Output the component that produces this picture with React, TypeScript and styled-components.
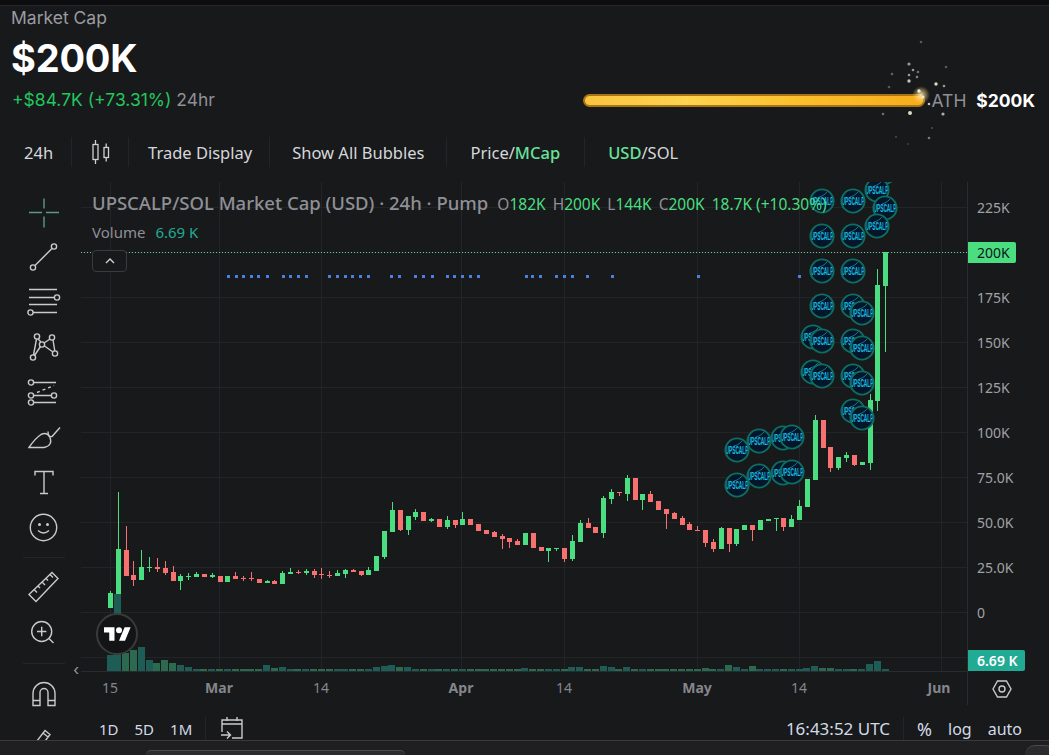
import { FunctionComponent } from "react";
import styled, { createGlobalStyle } from "styled-components";

const GlobalStyle = createGlobalStyle`
    html, body {
        margin: 0;
        background: #18191b;
        overflow: hidden;
    }
    #root {
        width: 1049px;
        height: 755px;
    }
`;

const UP = "#4ade80";
const DOWN = "#f87171";
const UI_FONT = `Inter, "Liberation Sans", sans-serif`;
const CHART_FONT = `"Noto Sans", "Open Sans", sans-serif`;

// dir, body top, body bottom, wick top, wick bottom (screen y)
type Candle = [1 | 0, number, number, number?, number?];

const candles: Candle[] = [
    [1, 593, 608, 591], [1, 549, 594, 492], [0, 550, 576, 526], [0, 575, 580, 561, 586], [1, 567, 580, 550],
    [1, 567, 568, 557, 572], [0, 567, 569, 558, 572], [0, 568, 573, 561, 575], [0, 572, 581, 566], [1, 576, 581, 574, 590],
    [1, 576, 577, 573, 580], [1, 574, 577, 572, 577], [0, 574, 577], [1, 575, 577, 573, 578], [0, 576, 582],
    [1, 576, 582], [0, 576, 579, 572], [0, 578, 579, 576, 581], [0, 578, 579, 572, 581], [0, 579, 583],
    [1, 581, 583, 580], [0, 581, 584, 580], [1, 573, 584, 571], [1, 572, 574, 568], [0, 572, 573, 570, 574],
    [1, 571, 573, 569, 575], [0, 571, 575, 569, 578], [0, 574, 575, 568, 579], [0, 575, 576, 571, 578], [1, 573, 576, 570],
    [1, 570, 574, 569, 578], [0, 570, 572, 569, 572], [0, 571, 575, 571, 576], [1, 570, 575, 567], [1, 556, 571],
    [1, 531, 557, 531, 559], [1, 510, 532, 502], [0, 510, 530, 510, 531], [1, 516, 530, 516, 535], [1, 512, 517, 509, 520],
    [0, 512, 521], [1, 519, 521, 518, 522], [0, 519, 527], [1, 520, 527, 516, 529], [0, 520, 525, 520, 528],
    [1, 519, 525, 512], [0, 519, 525], [0, 524, 531], [0, 530, 534], [0, 532, 537, 531],
    [0, 536, 539, 534, 549], [0, 538, 542, 538, 548], [0, 541, 545, 539], [1, 533, 545], [0, 533, 548],
    [0, 547, 551], [1, 548, 551, 548, 562], [1, 548, 549, 548, 551], [0, 548, 559, 548, 562], [1, 541, 559, 535, 561],
    [1, 523, 542, 520], [0, 523, 528, 518], [0, 527, 533], [1, 498, 533, 496, 538], [1, 492, 499, 489, 504],
    [0, 492, 493, 492, 496], [1, 478, 494, 475, 501], [0, 478, 500], [1, 494, 500, 494, 510], [0, 494, 502, 491],
    [0, 501, 510], [0, 509, 514, 509, 529], [0, 513, 519, 512], [0, 518, 525, 516], [0, 524, 530, 522],
    [0, 530, 531, 526, 531], [0, 530, 543, 530, 547], [0, 542, 549, 539, 552], [1, 528, 549, 527], [0, 528, 544, 528, 552],
    [1, 529, 544, 529, 546], [1, 525, 530], [0, 525, 530, 525, 541], [1, 520, 530], [1, 519, 521],
    [1, 518, 519, 518, 531], [0, 518, 527, 518, 531], [1, 519, 527, 515], [1, 506, 520, 500], [1, 479, 507],
    [1, 420, 480, 415], [0, 420, 448], [0, 447, 468, 447, 472], [1, 457, 468, 457, 470], [1, 455, 458, 452, 462],
    [0, 455, 465, 455, 466], [1, 462, 465], [1, 400, 463, 394, 470], [1, 285, 401, 269, 411], [1, 252, 286, 252, 352],
];

const volumeHeights: Record<number, number> = {
    0: 16, 1: 77, 2: 18, 3: 21, 4: 24, 5: 11, 6: 8, 7: 11, 8: 8, 9: 6, 10: 4, 20: 6, 21: 3, 22: 4,
    34: 4, 35: 5, 36: 6, 37: 4, 38: 4, 53: 3, 59: 4, 60: 4, 63: 5, 64: 4, 66: 4, 76: 3, 79: 6, 80: 4,
    82: 5, 89: 3, 90: 5, 91: 3, 92: 3, 97: 7, 98: 10, 99: 2,
};

const bubbles: [number, number][] = [
    [822, 201], [853, 201], [877, 190], [885, 208], [877, 226], [822, 236], [853, 236], [822, 271], [853, 271],
    [822, 306], [853, 306], [862, 313], [813, 337], [822, 341], [853, 341], [862, 348], [813, 372], [822, 376], [853, 376],
    [862, 383], [853, 411], [862, 418], [737, 450], [759, 441], [783, 438], [792, 437], [737, 485], [759, 476], [783, 473], [792, 472],
];

const markers = [
    228, 236, 243, 251, 258, 267, 283, 290, 298, 306, 329, 337, 345, 352, 360, 368, 391, 399, 415, 423, 432,
    447, 454, 462, 470, 478, 526, 532, 540, 556, 564, 572, 587, 612, 698, 799,
];

const sparks: [number, number, number, number][] = [
    [921, 42, 1.3, 0.3], [909, 64, 1.6, 0.6], [913, 70, 1.3, 0.6], [918, 72, 1.3, 0.4], [909, 75, 1.3, 0.6], [917, 77, 1.3, 0.5],
    [909, 81, 1.7, 0.8], [892, 74, 1.3, 0.35], [946, 67, 1.3, 0.3], [936, 84, 1.7, 0.9], [944, 86, 1.3, 0.6], [889, 87, 1.3, 0.3],
    [919, 91, 1.7, 1], [923, 97, 1.6, 0.9], [929, 104, 1.3, 0.8], [910, 113, 2, 0.9], [883, 114, 1.3, 0.4], [943, 114, 1.6, 0.7],
    [932, 128, 1, 0.25], [929, 138, 1.3, 0.45], [896, 137, 1, 0.25], [908, 144, 0.9, 0.2],
];

const gridX = [110, 219, 321, 461, 564, 697, 799, 941];
const gridY = [207, 252, 297, 342, 387, 432, 477, 522, 567, 612, 657];
const prices = ["225K", "", "175K", "150K", "125K", "100K", "75.0K", "50.0K", "25.0K", "0"];
const timeLabels: [string, number, boolean][] = [
    ["15", 110, false], ["Mar", 219, true], ["14", 321, false], ["Apr", 461, true],
    ["14", 564, false], ["May", 697, true], ["14", 799, false], ["Jun", 939, true],
];

const Page = styled.div`
    width: 1049px;
    height: 755px;
    display: flex;
    flex-direction: column;
    background: #18191b;
    overflow: hidden;
    font-family: ${UI_FONT};
`;

const TopStrip = styled.div`
    height: 5px;
    flex: none;
    background: #0d0d0f;
    border-bottom: 1px solid #26272a;
`;

const Header = styled.header`
    height: 122px;
    flex: none;
    box-sizing: border-box;
    padding: 2px 14px 0 11px;
    display: flex;
    justify-content: space-between;
    align-items: flex-end;
`;

const Stats = styled.div`
    display: flex;
    flex-direction: column;
`;

const StatLabel = styled.div`
    font-size: 17.5px;
    line-height: 20px;
    color: #9b9ca1;
`;

const StatValue = styled.div`
    font-size: 38px;
    font-weight: 700;
    line-height: 44px;
    margin-top: 8px;
    color: #fff;
    letter-spacing: -0.2px;
`;

const StatChange = styled.div`
    font-size: 17.5px;
    line-height: 22px;
    margin: 9px 0 17px 1px;
    color: #22c55e;

    span {
        color: #8f9096;
    }
`;

const Progress = styled.div`
    display: flex;
    align-items: center;
    gap: 7px;
    margin-bottom: 17px;
`;

const ProgressTrack = styled.div`
    position: relative;
    width: 342px;
    height: 13px;
    box-sizing: border-box;
    border-radius: 7px;
    border: 2px solid #a87414;
    background: linear-gradient(90deg, #f9c440 0%, #fdd34f 30%, #fbbf2b 65%, #f7ac1c 100%);
`;

const SparkLayer = styled.svg`
    position: absolute;
    left: 285px;
    top: -61px;
    pointer-events: none;
`;

const AthLabel = styled.div`
    font-size: 17.5px;
    line-height: 21px;
    color: #8f9096;
    white-space: nowrap;

    b {
        color: #fff;
        font-weight: 700;
        margin-left: 5px;
    }
`;

const Toolbar = styled.nav`
    height: 54px;
    flex: none;
    box-sizing: border-box;
    padding-bottom: 6px;
    display: flex;
    align-items: center;
    font-family: ${CHART_FONT};
    font-size: 16.5px;
    color: #d6d7da;
`;

const ToolItem = styled.div<{ $pad: number; $padRight?: number }>`
    height: 30px;
    box-sizing: border-box;
    display: flex;
    align-items: center;
    padding: 0 ${(p) => p.$padRight ?? 20}px 0 ${(p) => p.$pad}px;
    border-right: 1px solid #242528;
    white-space: nowrap;

    &:last-child {
        border-right: none;
    }
`;

const Accent = styled.span`
    color: #69e29a;
    font-weight: 500;
`;

const Workspace = styled.div`
    flex: 1;
    min-height: 0;
    display: flex;
`;

const Sidebar = styled.aside`
    width: 81px;
    flex: none;
    box-sizing: border-box;
    padding-top: 8px;
    display: flex;
    flex-direction: column;
    align-items: center;
    overflow: hidden;
    position: relative;
`;

const ToolIcon = styled.svg`
    width: 32px;
    height: 45px;
    flex: none;
    padding: 6.5px 0;
    box-sizing: border-box;
    fill: none;
    stroke: #c9cacc;
    stroke-width: 1.4;
    margin-left: 7px;
    overflow: visible;
`;

const SideDivider = styled.div<{ $top: number; $bottom: number }>`
    width: 42px;
    height: 1px;
    flex: none;
    margin: ${(p) => p.$top}px 0 ${(p) => p.$bottom}px 7px;
    background: #242528;
`;

const CollapseSide = styled.div`
    position: absolute;
    right: 2px;
    top: 479px;
    font-size: 15px;
    color: #9a9a9e;
    line-height: 18px;
`;

const Center = styled.div`
    flex: 1;
    min-width: 0;
    display: flex;
    flex-direction: column;
`;

const ChartRow = styled.div`
    display: flex;
    height: 523px;
    flex: none;
`;

const ChartColumn = styled.div`
    width: 886px;
    flex: none;
    display: flex;
    flex-direction: column;
    position: relative;
`;

const ChartCanvas = styled.svg`
    width: 886px;
    height: 489px;
    flex: none;
    display: block;
    border-bottom: 1px solid #2a2b2e;
`;

const Legend = styled.div`
    position: absolute;
    left: 11px;
    top: 8px;
    font-family: ${CHART_FONT};
`;

const LegendTitle = styled.div`
    display: flex;
    align-items: baseline;
    font-size: 18.5px;
    font-weight: 500;
    line-height: 26px;
    color: #8f9096;
    white-space: nowrap;
`;

const Ohlc = styled.span`
    font-size: 15.5px;
    font-weight: 400;
    margin-left: 9px;
    color: #8f9096;

    i {
        font-style: normal;
        color: #4ade80;
        margin-right: 7px;
    }
`;

const VolumeRow = styled.div`
    display: flex;
    gap: 10px;
    font-size: 15px;
    line-height: 20px;
    margin-top: 5px;
    color: #8f9096;

    b {
        font-weight: 400;
        color: #22ab94;
    }
`;

const CollapseButton = styled.div`
    width: 35px;
    height: 22px;
    box-sizing: border-box;
    margin-top: 8px;
    border: 1px solid #3a3b3f;
    border-radius: 4px;
    background: #18191b;
    display: flex;
    align-items: center;
    justify-content: center;
`;

const LogoBadge = styled.div`
    position: absolute;
    left: 15px;
    top: 431px;
    width: 42px;
    height: 42px;
    box-sizing: border-box;
    border-radius: 50%;
    border: 2px solid #3a3a3b;
    background: #131416;
    display: flex;
    align-items: center;
    justify-content: center;
`;

const TimeAxis = styled.div`
    position: relative;
    height: 33px;
    flex: none;
    font-family: ${CHART_FONT};
    font-size: 14px;
    color: #85868b;
`;

const TimeLabel = styled.span<{ $bold: boolean }>`
    position: absolute;
    top: 6px;
    transform: translateX(-50%);
    font-weight: ${(p) => (p.$bold ? 700 : 400)};
`;

const PriceScale = styled.div`
    position: relative;
    flex: 1;
    border-left: 1px solid #2a2b2e;
    display: flex;
    flex-direction: column;
    padding-top: 3px;
    font-family: ${CHART_FONT};
    font-size: 14px;
    color: #a0a1a5;
`;

const PriceLabel = styled.div`
    height: 45px;
    flex: none;
    line-height: 45px;
    padding-left: 9px;
`;

const PriceTag = styled.div<{ $bg: string; $fg: string; $top: number; $w: number; $bold?: boolean }>`
    position: absolute;
    left: 0;
    top: ${(p) => p.$top}px;
    width: ${(p) => p.$w}px;
    height: 21px;
    box-sizing: border-box;
    padding-left: 9px;
    line-height: 21px;
    background: ${(p) => p.$bg};
    color: ${(p) => p.$fg};
    font-weight: ${(p) => (p.$bold ? 600 : 400)};
    border-radius: 0 2px 2px 0;
`;

const ScaleSettings = styled.svg`
    position: absolute;
    left: 24px;
    top: 498px;
    fill: none;
    stroke: #c9cacc;
    stroke-width: 1.4;
`;

const BottomBar = styled.footer`
    height: 35px;
    flex: none;
    box-sizing: border-box;
    padding-top: 13px;
    display: flex;
    align-items: center;
    font-family: ${CHART_FONT};
    font-size: 15px;
    color: #d2dbe6;
    white-space: nowrap;
`;

const RangeGroup = styled.div`
    display: flex;
    gap: 16px;
    padding: 0 13px 0 18px;
    height: 24px;
    align-items: center;
    border-right: 1px solid #242528;
`;

const CalendarIcon = styled.svg`
    margin: -2px 0 0 14px;
    flex: none;
    overflow: visible;
    fill: none;
    stroke: #c9cacc;
    stroke-width: 1.4;
`;

const BottomRight = styled.div`
    margin-left: auto;
    display: flex;
    align-items: center;
    height: 24px;
    padding-right: 27px;
    font-size: 16px;
`;

const Clock = styled.div`
    font-size: 17px;
    padding-right: 13px;
    margin-right: 13px;
    line-height: 24px;
    border-right: 1px solid #242528;
`;

const ScaleOptions = styled.div`
    display: flex;
    gap: 16px;
    align-items: center;
`;

const Percent = styled.span`
    font-size: 18px;
    line-height: 24px;
`;

const BrowserStrip = styled.div`
    height: 14px;
    flex: none;
    position: relative;
    background: #1f1f21;
    border-top: 1px solid #3a3a3c;
`;

const BrowserPill = styled.div<{ $left: number; $width: number; $top: number }>`
    position: absolute;
    left: ${(p) => p.$left}px;
    width: ${(p) => p.$width}px;
    top: ${(p) => p.$top}px;
    bottom: 0;
    background: #2b2b2d;
    border-radius: 10px 10px 0 0;
    border-top: 1px solid #4a4a4c;
`;

const Bubble: FunctionComponent<{ x: number; y: number; id: number }> = ({ x, y, id }) => (
    <g>
        <clipPath id={`bubble-${id}`}>
            <circle cx={x} cy={y} r={10.8} />
        </clipPath>
        <circle cx={x} cy={y} r={11.6} fill="#04172a" stroke="#0e6e62" strokeWidth={1.9} />
        <g clipPath={`url(#bubble-${id})`}>
            <path d={`M${x - 3} ${y - 4}l3 -1l3 -2l3 -3`} stroke="#1d7a9a" strokeWidth={0.9} fill="none" />
            <text
                x={x - 11.5}
                y={y + 3.5}
                fontSize={10}
                fontWeight={700}
                fontFamily={`"Liberation Sans", sans-serif`}
                fill="#18bfe2"
                textLength={23}
                lengthAdjust="spacingAndGlyphs"
            >
                UPSCALP
            </text>
        </g>
    </g>
);

const Chart: FunctionComponent = () => (
    <ChartCanvas viewBox="81 182 886 489">
        {gridX.map((x) => (
            <line key={x} x1={x + 0.5} x2={x + 0.5} y1={182} y2={671} stroke="#232427" />
        ))}
        {gridY.map((y) => (
            <line key={y} x1={81} x2={967} y1={y + 0.5} y2={y + 0.5} stroke="#232427" />
        ))}
        {candles.map((c, i) => {
            const x = Math.round(106.5 + i * 7.83);
            const h = volumeHeights[i] ?? 2;
            return <rect key={i} x={x} width={7} y={671 - h} height={h} fill={c[0] ? "#1e5c56" : "#2b6a51"} />;
        })}
        {candles.map((c, i) => {
            const x = Math.round(110 + i * 7.83);
            const color = c[0] ? UP : DOWN;
            return (
                <g key={i}>
                    <rect x={x} width={1} y={c[3] ?? c[1]} height={(c[4] ?? c[2]) - (c[3] ?? c[1])} fill={color} />
                    <rect x={x - 2} width={5} y={c[1]} height={Math.max(c[2] - c[1], 1)} fill={color} />
                </g>
            );
        })}
        <line x1={81} x2={967} y1={252.5} y2={252.5} stroke="#5fd49a" strokeWidth={1} strokeDasharray="1 2" />
        {markers.map((x) => (
            <rect key={x} x={x - 1} y={275} width={3} height={3} fill="#4a80e0" />
        ))}
        <circle cx={885} cy={172} r={11.6} fill="#04172a" stroke="#0e6e62" strokeWidth={1.9} />
        {bubbles.map(([x, y], i) => (
            <Bubble key={i} x={x} y={y} id={i} />
        ))}
    </ChartCanvas>
);

const App: FunctionComponent = () => (
    <Page>
        <GlobalStyle />
        <TopStrip />
        <Header>
            <Stats>
                <StatLabel>Market Cap</StatLabel>
                <StatValue>$200K</StatValue>
                <StatChange>
                    +$84.7K (+73.31%) <span>24hr</span>
                </StatChange>
            </Stats>
            <Progress>
                <ProgressTrack>
                    <SparkLayer width={90} height={115} viewBox="870 35 90 115">
                        <defs>
                            <filter id="soft" x="-100%" y="-100%" width="300%" height="300%">
                                <feGaussianBlur stdDeviation="0.6" />
                            </filter>
                            <radialGradient id="glow">
                                <stop offset="0%" stopColor="#fff3c0" stopOpacity="0.9" />
                                <stop offset="100%" stopColor="#ffd76a" stopOpacity="0" />
                            </radialGradient>
                        </defs>
                        <circle cx={921} cy={95} r={9} fill="url(#glow)" />
                        <g filter="url(#soft)">
                            {sparks.map(([x, y, r, o], i) => (
                                <circle key={i} cx={x} cy={y} r={r} fill="#f3ecd8" opacity={o} />
                            ))}
                        </g>
                    </SparkLayer>
                </ProgressTrack>
                <AthLabel>
                    ATH <b>$200K</b>
                </AthLabel>
            </Progress>
        </Header>
        <Toolbar>
            <ToolItem $pad={24} $padRight={18}>24h</ToolItem>
            <ToolItem $pad={20} $padRight={18}>
                <svg width={18} height={26} viewBox="0 0 18 26" fill="none" stroke="#d0d1d3" strokeWidth={1.3}>
                    <rect x={1} y={5.5} width={5} height={15} />
                    <path d="M3.5 1v4.5M3.5 20.5V25" />
                    <rect x={12} y={8.5} width={4.5} height={10} />
                    <path d="M14.2 4.5v4M14.2 18.5v4" />
                </svg>
            </ToolItem>
            <ToolItem $pad={19} $padRight={17}>Trade Display</ToolItem>
            <ToolItem $pad={22} $padRight={22}>Show All Bubbles</ToolItem>
            <ToolItem $pad={23} $padRight={24}>
                Price/<Accent>MCap</Accent>
            </ToolItem>
            <ToolItem $pad={23}>
                <Accent>USD</Accent>/SOL
            </ToolItem>
        </Toolbar>
        <Workspace>
            <Sidebar>
                <ToolIcon viewBox="0 0 32 32">
                    <path d="M1 16H14M18 16H31M16 2V12M16 20V31" stroke="#5a9c80" />
                </ToolIcon>
                <ToolIcon viewBox="0 0 32 32">
                    <circle cx={5} cy={26} r={2.6} />
                    <circle cx={26} cy={5} r={2.6} />
                    <path d="M7 24L24 7" />
                </ToolIcon>
                <ToolIcon viewBox="0 0 32 32">
                    <path d="M1 3H29M1 11H26M1 18H29M5 26H29" />
                    <circle cx={29} cy={11} r={2.6} />
                    <circle cx={2.5} cy={26} r={2.6} />
                </ToolIcon>
                <ToolIcon viewBox="0 0 32 32">
                    <circle cx={9} cy={5} r={2.6} />
                    <circle cx={24} cy={6} r={2.6} />
                    <circle cx={14} cy={13} r={2.6} />
                    <circle cx={5} cy={26} r={2.6} />
                    <circle cx={27} cy={22} r={2.6} />
                    <path d="M8.5 7.5L5.5 23.5M10 7.5L13 10.5M16 11.5L22 7.5M25 8.5L26.8 19.5M25 20.5L16.5 14.5M12.5 15L6.5 24" />
                </ToolIcon>
                <ToolIcon viewBox="0 0 32 32">
                    <circle cx={3} cy={6} r={2.6} />
                    <circle cx={3} cy={19} r={2.6} />
                    <circle cx={26} cy={19} r={2.6} />
                    <circle cx={3} cy={26} r={2.6} />
                    <path d="M5.6 6H28M5.6 19H23.4M5.6 26H28" />
                    <path d="M9 16L26 9" strokeDasharray="3 3" />
                </ToolIcon>
                <ToolIcon viewBox="0 0 32 32">
                    <path d="M1 26H16Q25 24 22 16Q19 10 13 13Q7 17 1 26Z" />
                    <path d="M20 10Q20 16 24 15L32 6" />
                </ToolIcon>
                <ToolIcon viewBox="0 0 32 32">
                    <path d="M7 9V5H25V9M16 5V27M12 27H20" />
                </ToolIcon>
                <ToolIcon viewBox="0 0 32 32">
                    <circle cx={15.5} cy={16} r={13.2} />
                    <circle cx={11.5} cy={13} r={0.8} />
                    <circle cx={19.5} cy={13} r={0.8} />
                    <path d="M10 19Q15.5 24 21 19" />
                </ToolIcon>
                <SideDivider $top={7} $bottom={6} />
                <ToolIcon viewBox="0 0 32 32">
                    <path d="M1 24L24 2L30 8L8 31Z" />
                    <path d="M6 19L9 22M10 15.5L12 17.5M14 11.5L17 14.5M18 8L20 10M22 4L25 7" />
                </ToolIcon>
                <ToolIcon viewBox="0 0 32 32">
                    <circle cx={13.7} cy={16} r={10} />
                    <path d="M9 16H18.4M13.7 11.3V20.7M21 23L25.5 27.5" />
                </ToolIcon>
                <SideDivider $top={9} $bottom={7} />
                <ToolIcon viewBox="0 0 32 32">
                    <path d="M5 28V16A11 11 0 0 1 27 16V28H20V15A4 4 0 0 0 12 15V28Z" />
                    <path d="M5 23H12M20 23H27" />
                </ToolIcon>
                <ToolIcon viewBox="0 0 32 32">
                    <path d="M4 25L17 8L22 12L9 29ZM15 10.5L20 14.5" />
                </ToolIcon>
                <CollapseSide>‹</CollapseSide>
            </Sidebar>
            <Center>
                <ChartRow>
                    <ChartColumn>
                        <Chart />
                        <Legend>
                            <LegendTitle>
                                UPSCALP/SOL Market Cap (USD) · 24h · Pump
                                <Ohlc>
                                    O<i>182K</i>H<i>200K</i>L<i>144K</i>C<i>200K</i>
                                    <i>18.7K (+10.30%)</i>
                                </Ohlc>
                            </LegendTitle>
                            <VolumeRow>
                                Volume <b>6.69 K</b>
                            </VolumeRow>
                            <CollapseButton>
                                <svg width={12} height={8} viewBox="0 0 12 8" fill="none" stroke="#d0d1d3" strokeWidth={1.4}>
                                    <path d="M2 6L6 2L10 6" />
                                </svg>
                            </CollapseButton>
                        </Legend>
                        <LogoBadge>
                            <svg width={27} height={14} viewBox="0 4 36 18" fill="#fff">
                                <path d="M14 22H7V11H0V4h14v18zM28 22h-8l7.5-18h8L28 22z" />
                                <circle cx={20} cy={8} r={4} />
                            </svg>
                        </LogoBadge>
                        <TimeAxis>
                            {timeLabels.map(([label, x, bold]) => (
                                <TimeLabel key={x} $bold={bold} style={{ left: x - 81 }}>
                                    {label}
                                </TimeLabel>
                            ))}
                        </TimeAxis>
                    </ChartColumn>
                    <PriceScale>
                        {prices.map((p, i) => (
                            <PriceLabel key={i}>{p}</PriceLabel>
                        ))}
                        <PriceTag $bg="#4ade80" $fg="#10151a" $top={60} $w={48}>200K</PriceTag>
                        <PriceTag $bg="#22ab94" $fg="#fff" $top={468} $w={57} $bold>6.69 K</PriceTag>
                        <ScaleSettings width={20} height={18} viewBox="0 0 20 18">
                            <path d="M1 9L5.5 1H14.5L19 9L14.5 17H5.5Z" />
                            <circle cx={10} cy={9} r={3} />
                        </ScaleSettings>
                    </PriceScale>
                </ChartRow>
                <BottomBar>
                    <RangeGroup>
                        <span>1D</span>
                        <span>5D</span>
                        <span>1M</span>
                    </RangeGroup>
                    <CalendarIcon width={24} height={24} viewBox="0 0 24 24">
                        <path d="M2 16V4H22V22H12M2 8H22M7 1V5M17 1V5M1 19H10M7 15.5L10.5 19L7 22.5" />
                    </CalendarIcon>
                    <BottomRight>
                        <Clock>16:43:52 UTC</Clock>
                        <ScaleOptions>
                            <Percent>%</Percent>
                            <span>log</span>
                            <span>auto</span>
                        </ScaleOptions>
                    </BottomRight>
                </BottomBar>
            </Center>
        </Workspace>
        <BrowserStrip>
            <BrowserPill $left={146} $width={259} $top={9} />
            <BrowserPill $left={1025} $width={30} $top={4} />
        </BrowserStrip>
    </Page>
);

export default App;
